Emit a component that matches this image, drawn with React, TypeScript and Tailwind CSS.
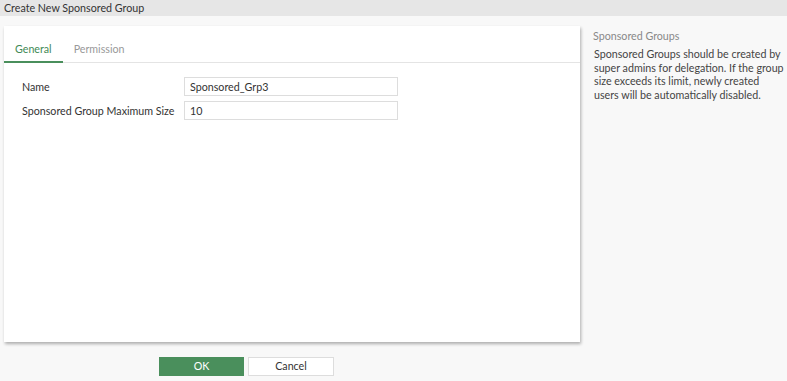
export default function App() {
  return (
    <div className="h-[381px] w-[787px] overflow-hidden bg-[#f8f8f8] text-[10.7px] font-['Lato','Open_Sans',sans-serif] text-[#333]">
      {/* Title bar */}
      <div className="flex h-[16px] items-center bg-[#e6e6e6] pl-[4px] text-[10.7px] leading-none text-[#333]">
        Create New Sponsored Group
      </div>

      <div className="flex pt-[10px]">
        {/* Left: dialog */}
        <div className="flex w-[589px] flex-col">
          <div className="ml-[4px] flex h-[316px] w-[576px] flex-col bg-white shadow-[1px_2px_3px_rgba(0,0,0,0.3)]">
            <div className="flex border-b border-[#e4e4e4]">
              <div className="-mb-px border-b-2 border-[#4a8f5c] px-[11px] pt-[15px] pb-[4px] text-[#3f8a56]">General</div>
              <div className="px-[11px] pt-[15px] pb-[4px] text-[#999]">Permission</div>
            </div>
            <div className="flex flex-col gap-[5px] pt-[14px] pl-[14px]">
              <div className="flex items-center">
                <div className="w-[166px] pl-[4px]">Name</div>
                <div className="flex h-[19px] w-[214px] items-center border border-[#ddd] pl-[5px]">Sponsored_Grp3</div>
              </div>
              <div className="flex items-center">
                <div className="w-[166px] pl-[4px]">Sponsored Group Maximum Size</div>
                <div className="flex h-[19px] w-[214px] items-center border border-[#ddd] pl-[5px]">10</div>
              </div>
            </div>
          </div>
          <div className="flex gap-[4px] pt-[15px] pl-[159px]">
            <button className="h-[19px] w-[85px] bg-[#4a8f5c] text-white">OK</button>
            <button className="h-[19px] w-[86px] border border-[#ddd] bg-white text-[#333]">Cancel</button>
          </div>
        </div>

        {/* Right: help */}
        <div className="w-[198px] pl-[4px] pt-[2px]">
          <div className="text-[#888]">Sponsored Groups</div>
          <p className="mt-[3px] whitespace-nowrap pl-[1px] leading-[13.5px] text-[#444]">
            Sponsored Groups should be created by
            <br />
            super admins for delegation. If the group
            <br />
            size exceeds its limit, newly created
            <br />
            users will be automatically disabled.
          </p>
        </div>
      </div>
    </div>
  );
}
